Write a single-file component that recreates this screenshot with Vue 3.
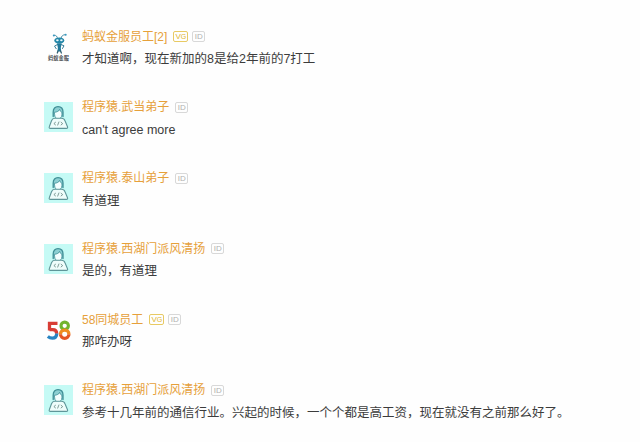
<template>
  <div class="comment-list">
    <div v-for="item in comments" :key="item.id" class="comment-item">
      <!-- 头像 -->
      <div class="avatar" :class="item.avatar">
        <svg
          v-if="item.avatar === 'coder'"
          width="30"
          height="30"
          viewBox="0 0 30 30"
          fill="none"
          stroke="#3f8f96"
          stroke-linecap="round"
          stroke-linejoin="round"
        >
          <path
            d="M9.200 14.500V10C9.200 6.500 11.200 4.600 14 4.600s5 1.900 5 5.400v4.500"
            fill="#8ccfd2"
            stroke-width="1.300"
          />
          <path
            d="M10.600 10.300c2.600-.2 4.300-1.200 5-2.900.4 1.500 1.200 2.400 2.300 2.900v2.300c0 2.600-1.500 4.200-3.700 4.200s-3.600-1.600-3.600-4.200z"
            fill="#f4ffff"
            stroke-width="0.8"
          />
          <path
            d="M10.700 16.200h6.800c2 0 2.900.8 3.500 2.500l2.500 6c.4 1-.1 1.700-1 1.700H6.300c-.9 0-1.400-.7-1-1.700l2.200-6c.6-1.700 1.300-2.500 3.200-2.500z"
            fill="#effdfb"
            stroke="#5f9699"
            stroke-width="1.100"
          />
          <path
            d="M11.500 20.300L9.900 21.600l1.600 1.300M17.100 20.300l1.600 1.300-1.600 1.300M14.900 20l-1.200 3.100"
            stroke="#73918b"
            stroke-width="0.9"
          />
        </svg>
        <svg
          v-else-if="item.avatar === 'ant'"
          width="30"
          height="30"
          viewBox="0 0 30 30"
          fill="none"
          stroke-linecap="round"
        >
          <path
            d="M13.500 6.500C13.300 4.300 12 3 10.300 3.200M17 6.500c.3-2.500 1.900-3.900 4.200-3.800"
            stroke="#4a8fa8"
            stroke-width="1"
          />
          <circle cx="9.800" cy="3.400" r="1" fill="#3a9ac0" />
          <circle cx="21.700" cy="2.700" r="1" fill="#3a9ac0" />
          <ellipse cx="15.300" cy="8.600" rx="5" ry="3.200" fill="#2487a8" />
          <ellipse cx="13.400" cy="8.300" rx="1.300" ry="1" fill="#e8f8fc" />
          <ellipse cx="17.400" cy="8.300" rx="1.300" ry="1" fill="#e8f8fc" />
          <path
            d="M13.500 12.500l-3 1.600 1.700 2.600M17 12.500l3 1.300-1.500 2.700"
            stroke="#397f99"
            stroke-width="1"
          />
          <path d="M13 11.500h4.600l-.8 4.500.5 3.500h-4l.6-3.500z" fill="#22799a" />
          <path d="M14 19l-.7 2M16.500 19l.9 2" stroke="#315f70" stroke-width="1.300" />
        </svg>
        <svg
          v-else
          width="30"
          height="30"
          viewBox="0 0 30 30"
          fill="none"
          stroke-width="3.300"
        >
          <path d="M13.500 7.400H5.500v7.100" stroke="#d83d35" />
          <path d="M5.500 13.700h3.200c2.400 0 4 1.600 4 4" stroke="#d83d35" />
          <path d="M12.700 17.400c0 3-1.700 4.700-4.300 4.700-1.900 0-3.300-.6-4.600-1.600" stroke="#2884c2" />
          <circle cx="20.700" cy="9.800" r="3.700" stroke="#72b42d" stroke-width="3.100" />
          <path d="M16.500 18.200a4.200 4.100 0 0 1 8.400 0" stroke="#ef8c21" />
          <path d="M16.500 18.200a4.200 4.100 0 0 0 8.400 0" stroke="#e45424" />
        </svg>
        <span v-if="item.avatar === 'ant'" class="avatar-label">蚂蚁金服</span>
      </div>

      <!-- 昵称与评论 -->
      <div class="comment-body">
        <div class="comment-head">
          <span class="name">{{ item.name }}</span>
          <span v-if="item.verified" class="badge badge-v">V<small>G</small></span>
          <span class="badge badge-id">ID</span>
        </div>
        <div class="comment-text">{{ item.text }}</div>
      </div>
    </div>
  </div>
</template>

<script setup>
const comments = [
  {
    id: 1,
    avatar: "ant",
    name: "蚂蚁金服员工[2]",
    verified: true,
    text: "才知道啊，现在新加的8是给2年前的7打工",
  },
  { id: 2, avatar: "coder", name: "程序猿.武当弟子", text: "can't agree more" },
  { id: 3, avatar: "coder", name: "程序猿.泰山弟子", text: "有道理" },
  { id: 4, avatar: "coder", name: "程序猿.西湖门派风清扬", text: "是的，有道理" },
  { id: 5, avatar: "five8", name: "58同城员工", verified: true, text: "那咋办呀" },
  {
    id: 6,
    avatar: "coder",
    name: "程序猿.西湖门派风清扬",
    text: "参考十几年前的通信行业。兴起的时候，一个个都是高工资，现在就没有之前那么好了。",
  },
];
</script>

<style>
body {
  background: #fefefe;
}
</style>

<style scoped>
.comment-list {
  box-sizing: border-box;
  height: 442px;
  padding: 28px 0 0 44px;
  overflow: hidden;
  font-family: "Liberation Sans", "Noto Sans CJK SC", sans-serif;
}

.comment-item {
  display: flex;
  align-items: flex-start;
  height: 70.8px;
}

/* 头像 */
.avatar {
  display: flex;
  flex-direction: column;
  align-items: center;
  flex-shrink: 0;
  width: 29px;
  height: 30px;
  margin: 3.5px 9px 0 0;
  overflow: hidden;
}

.avatar.coder {
  background: #c5faf5;
}

.avatar svg {
  display: block;
  flex-shrink: 0;
}

.avatar.five8 {
  margin-top: 4.5px;
}

.avatar.ant {
  height: 32px;
}

.avatar.ant svg {
  margin-bottom: -7px;
}

.avatar-label {
  color: #4b4f52;
  font-size: 5.2px;
  font-weight: 700;
  line-height: 7px;
  white-space: nowrap;
}

/* 昵称行 */
.comment-head {
  display: flex;
  align-items: center;
  height: 17px;
}

.name {
  margin-right: 6px;
  padding-top: 1px;
  color: #e6a03a;
  font-size: 12px;
  line-height: 17px;
  white-space: nowrap;
}

.badge {
  box-sizing: border-box;
  height: 11px;
  margin-right: 4px;
  border: 1px solid #d8d8d8;
  border-radius: 2px;
  color: #b0b0b0;
  font-size: 8px;
  line-height: 9px;
  text-align: center;
}

.badge-v {
  width: 15px;
  border-color: #e8ca63;
  color: #dfb62f;
}

.badge-v small {
  font-size: 7px;
}

.badge-id {
  width: 13px;
}

/* 评论内容 */
.comment-text {
  margin-top: 5px;
  color: #3c3c3c;
  font-size: 12.5px;
  line-height: 18px;
  white-space: nowrap;
}
</style>
